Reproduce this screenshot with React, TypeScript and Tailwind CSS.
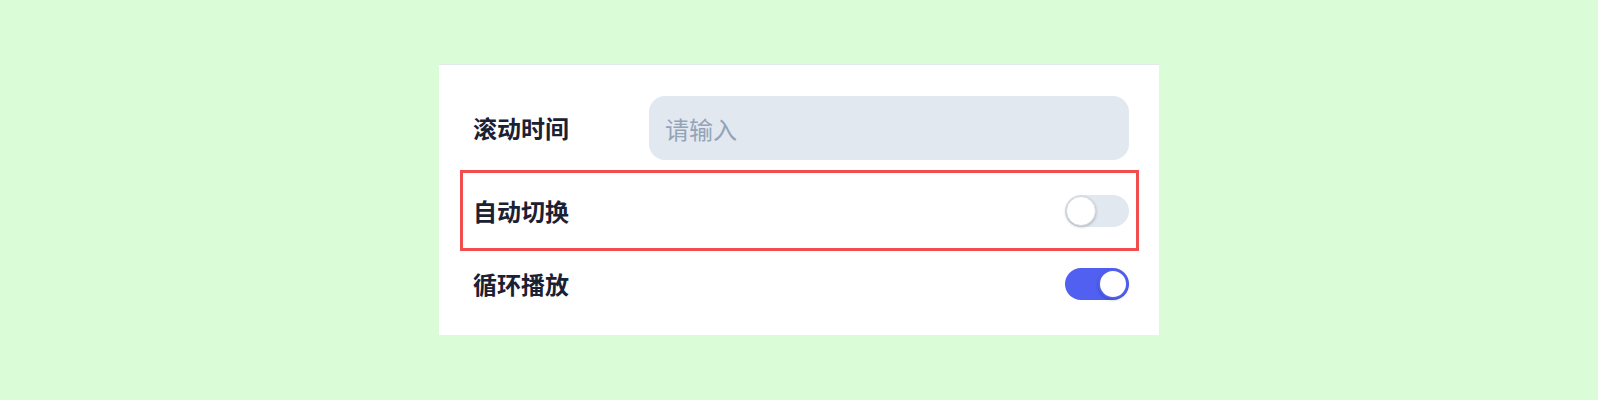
import React, { useState } from 'react'

const Toggle = ({ on, onChange }: { on: boolean; onChange: (v: boolean) => void }) => {
  return (
    <button
      type="button"
      onClick={() => onChange(!on)}
      className={`relative h-8 w-16 shrink-0 rounded-full transition-colors ${on ? 'bg-[#5160f0]' : 'bg-[#e2e8f0]'}`}
    >
      <span
        className={`absolute top-[1px] size-[30px] rounded-full bg-white shadow-[0_1px_3px_rgba(0,0,0,0.25)] transition-all ${
          on ? 'left-[33px] border-2 border-[#5160f0]' : 'left-[1px] border border-[#d5dbe4]'
        }`}
      />
    </button>
  )
}

export default function App() {
  const [autoSwitch, setAutoSwitch] = useState(false)
  const [loop, setLoop] = useState(true)

  return (
    <div
      className="flex h-[400px] w-full justify-center bg-[#dafdd8] pt-16"
      style={{ fontFamily: '"Noto Sans CJK SC", "Noto Sans", sans-serif' }}
    >
      <div className="h-[271px] w-[720px] border-t border-[#e2e8f0] bg-white pl-[21px] pr-[20px] pt-[31px]">
        <div className="flex items-center pl-[13px] pr-[10px]">
          <span className="w-[176px] text-[24px] font-bold text-[#1b2033]">滚动时间</span>
          <input
            placeholder="请输入"
            className="h-16 flex-1 rounded-2xl bg-[#e2e8f0] px-4 text-[24px] text-[#1b2033] outline-none placeholder:text-[#94a3b8]"
          />
        </div>

        <div className="mt-[10px] flex h-[81px] items-center justify-between border-[3px] border-[#f24d4d] pl-[10px] pr-[7px]">
          <span className="text-[24px] font-bold text-[#1b2033]">自动切换</span>
          <Toggle on={autoSwitch} onChange={setAutoSwitch} />
        </div>

        <div className="mt-[17px] flex h-8 items-center justify-between pl-[13px] pr-[10px]">
          <span className="text-[24px] font-bold text-[#1b2033]">循环播放</span>
          <Toggle on={loop} onChange={setLoop} />
        </div>
      </div>
    </div>
  )
}
